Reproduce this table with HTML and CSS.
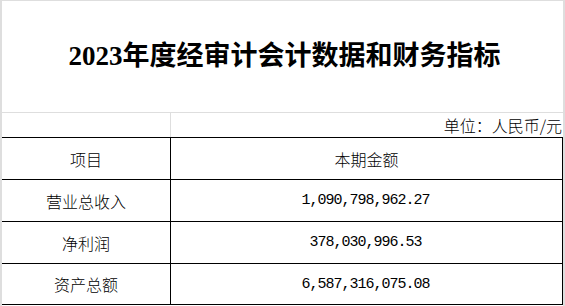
FILE: index.html
```html
<!DOCTYPE html>
<html lang="zh-CN">
<head>
<meta charset="utf-8">
<title>2023年度经审计会计数据和财务指标</title>
<link rel="stylesheet" href="styles.css">
</head>
<body>
<div class="sheet">
  <div class="title-row">
    <h1 class="title">2023年度经审计会计数据和财务指标</h1>
  </div>
  <div class="unit-row">
    <div class="unit-blank"></div>
    <div class="unit-text">单位：人民币/元</div>
  </div>
  <div class="table">
    <div class="cell label head">项目</div>
    <div class="cell value head">本期金额</div>
    <div class="cell label">营业总收入</div>
    <div class="cell value num">1,090,798,962.27</div>
    <div class="cell label">净利润</div>
    <div class="cell value num">378,030,996.53</div>
    <div class="cell label last">资产总额</div>
    <div class="cell value num last">6,587,316,075.08</div>
  </div>
</div>
</body>
</html>
```

FILE: styles.css
```css
html, body {
  margin: 0;
  padding: 0;
  background: #ffffff;
}

body {
  width: 565px;
  height: 306px;
  overflow: hidden;
  font-family: "Noto Sans CJK SC", sans-serif;
  color: #000000;
}

.sheet {
  box-sizing: border-box;
  width: 565px;
  height: 306px;
  border-left: 2px solid #dedede;
  border-right: 2px solid #dedede;
  border-top: 1px solid #dedede;
}

.title-row {
  height: 111px;
  border-bottom: 1px solid #dedede;
  display: flex;
  align-items: center;
  justify-content: center;
}

.title {
  margin: 0;
  font-family: "Liberation Serif", "Noto Sans CJK SC", serif;
  font-weight: bold;
  font-size: 27px;
  line-height: 1;
  padding-left: 4px;
}

.unit-row {
  display: grid;
  grid-template-columns: 169px 1fr;
  height: 24px;
}

.unit-blank {
  border-right: 1px solid #dedede;
}

.unit-text {
  text-align: right;
  font-size: 16px;
  line-height: 24px;
  padding-right: 1px;
  font-weight: 300;
}

.table {
  display: grid;
  grid-template-columns: 169px 392px;
  grid-template-rows: 42px 42px 42px 41px;
  border-top: 1px solid #000000;
}

.cell {
  box-sizing: border-box;
  display: flex;
  align-items: center;
  justify-content: center;
  border-bottom: 1px solid #000000;
  font-size: 16px;
  font-weight: 300;
}

.label {
  border-right: 1px solid #000000;
}

.value {
  border-right: 1px solid #000000;
}

.num {
  font-family: "Liberation Mono", monospace;
  font-size: 15px;
  letter-spacing: -1px;
  font-weight: normal;
  padding-right: 2px;
}
```
